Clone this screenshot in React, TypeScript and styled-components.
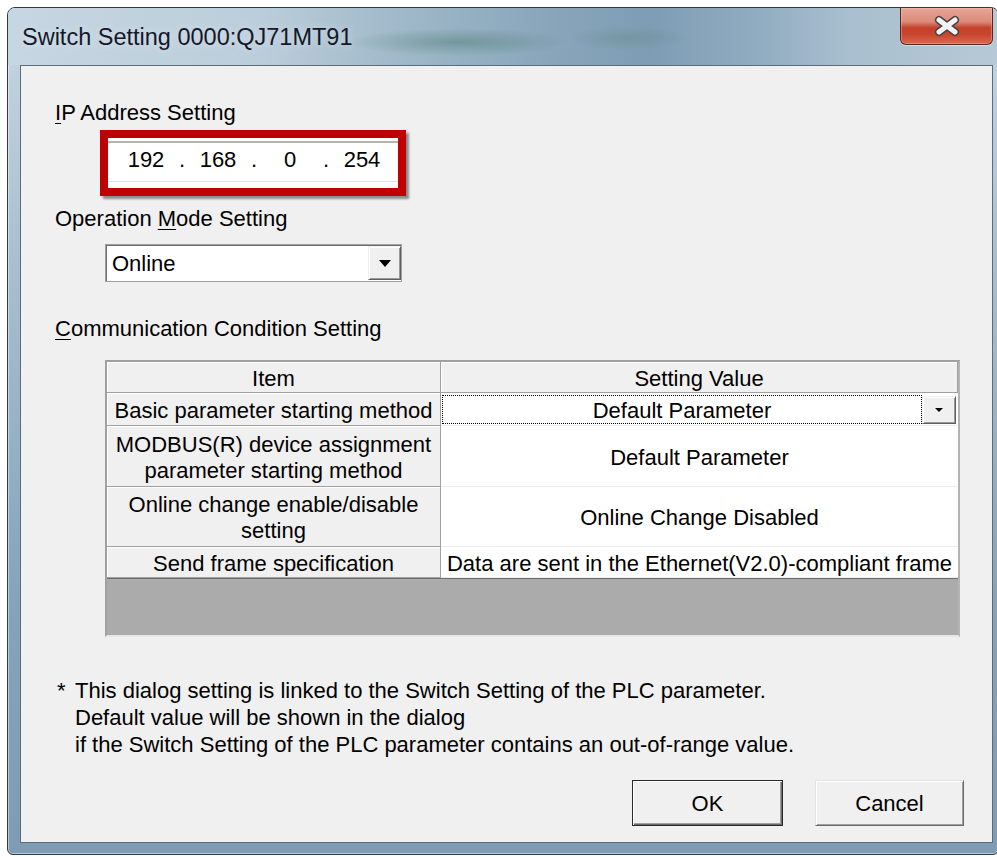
import React from 'react'
import styled, { createGlobalStyle } from 'styled-components'

const GlobalStyle = createGlobalStyle`
  html, body {
    margin: 0;
    background: #fff;
    overflow: hidden;
  }
  body {
    font-family: "Liberation Sans", Arial, sans-serif;
    color: #000;
  }
`

const Screen = styled.div`
  width: 997px;
  height: 857px;
  padding: 7px 0 0 7px;
  box-sizing: border-box;
  overflow: hidden;
`

const Window = styled.div`
  width: 992px;
  height: 848px;
  box-sizing: border-box;
  display: flex;
  flex-direction: column;
  padding: 0 5px 11px 12px;
  border: 1px solid #2f3b45;
  border-radius: 8px 8px 6px 6px;
  background: linear-gradient(180deg, #c8d7e2 0%, #a9bfcf 30%, #86a3b9 70%, #7e9cb5 100%);
  box-shadow: inset 0 0 0 1px rgba(255, 255, 255, 0.45);
`

const TitleBar = styled.div`
  height: 57px;
  flex: none;
  display: flex;
  align-items: flex-start;
  margin: 0 -5px 0 -12px;
  padding: 0 5px 0 14px;
  border-radius: 7px 7px 0 0;
  background:
    radial-gradient(ellipse 110px 14px at 450px 34px, rgba(72, 120, 108, 0.45), transparent),
    radial-gradient(ellipse 60px 12px at 620px 30px, rgba(90, 130, 115, 0.3), transparent),
    linear-gradient(90deg, #c6d6e2 0%, #bccedb 25%, #9fb8c9 40%, #88a5ba 55%, #7e9db4 65%, #8fabc0 75%, #a9bfcf 85%, #b6c9d6 100%);
`

const Caption = styled.div`
  padding-top: 15px;
  font-size: 23.5px;
  line-height: 28px;
  color: #14182a;
  text-shadow: 0 0 8px rgba(255, 255, 255, 0.5);
`

const CloseButton = styled.div`
  margin-left: auto;
  width: 93px;
  height: 37px;
  box-sizing: border-box;
  display: flex;
  align-items: center;
  justify-content: center;
  border: 1px solid #5a231b;
  border-top: none;
  border-radius: 0 0 6px 6px;
  background: linear-gradient(180deg, #e7a597 0%, #dc8b7b 38%, #c6412b 55%, #c7442d 72%, #d9694f 100%);
  box-shadow: 0 1px 0 rgba(255, 255, 255, 0.45), inset 0 0 0 1px rgba(255, 210, 200, 0.35);
`

const Client = styled.div`
  flex: 1;
  display: flex;
  flex-direction: column;
  padding-bottom: 16px;
  border: 1px solid #5f6b76;
  background: #f0f0f0;
  font-size: 22px;
  line-height: 26px;
`

const GroupLabel = styled.div<{ $top: number }>`
  margin: ${p => p.$top}px 0 0 34px;

  u {
    text-decoration-thickness: 1px;
    text-underline-offset: 3px;
  }
`

const IpFrame = styled.div`
  margin: 4px 0 0 79px;
  width: 306px;
  height: 66px;
  box-sizing: border-box;
  border: 8px solid #c00000;
  box-shadow: 3px 3px 2px rgba(60, 60, 60, 0.55);
`

const IpField = styled.div`
  height: 100%;
  box-sizing: border-box;
  display: flex;
  padding: 9px 0 0 7px;
  background: #fff;
  box-shadow: inset 0 3px 0 #fff, inset 0 5px 0 #b4b4b4, inset 0 -6px 0 #fff, inset 0 -7px 0 #e2e2e2;
`

const Octet = styled.span`
  width: 62px;
  text-align: center;
`

const Dot = styled.span`
  width: 10px;
  text-align: center;
`

const Combo = styled.div`
  margin: 12px 0 0 84px;
  width: 297px;
  height: 38px;
  box-sizing: border-box;
  display: flex;
  align-items: center;
  border: 1px solid #a0a0a0;
  background: #fff;
  box-shadow: inset 1px 1px 0 #6e6e6e;
`

const ComboText = styled.span`
  flex: 1;
  padding-left: 6px;
  padding-top: 2px;
`

const DropButton = styled.div<{ $w: number; $h: number }>`
  width: ${p => p.$w}px;
  height: ${p => p.$h}px;
  box-sizing: border-box;
  display: flex;
  align-items: center;
  justify-content: center;
  background: #f0f0f0;
  border: 1px solid;
  border-color: #f0f0f0 #5e5e5e #5e5e5e #f0f0f0;
  box-shadow: inset 1px 1px 0 #fff, inset -1px -1px 0 #9a9a9a;
  flex: none;
`

const Arrow = styled.span<{ $size: number }>`
  width: 0;
  height: 0;
  border-left: ${p => p.$size}px solid transparent;
  border-right: ${p => p.$size}px solid transparent;
  border-top: ${p => Math.round(p.$size * 1.1)}px solid #000;
`

const Table = styled.div`
  margin: 18px 0 0 84px;
  width: 855px;
  height: 277px;
  box-sizing: border-box;
  display: grid;
  grid-template-columns: 334px 1fr;
  grid-template-rows: 31px 33px 61px 60px 31px 1fr;
  border: 2px solid;
  border-color: #a0a0a0 #b4b4b4 #e6e6e6 #a0a0a0;
  background: #ababab;
`

const HeadCell = styled.div`
  display: flex;
  align-items: center;
  justify-content: center;
  padding-top: 3px;
  text-align: center;
  background: #f0f0f0;
  border-right: 1px solid #a0a0a0;
  border-bottom: 1px solid #a0a0a0;
  box-shadow: inset 1px 1px 0 #fff;
  line-height: 26px;
  white-space: nowrap;
`

const ValueCell = styled.div<{ $focused?: boolean }>`
  display: flex;
  align-items: center;
  justify-content: center;
  text-align: center;
  background: #fff;
  border-bottom: 1px solid #ececec;
  padding: ${p => (p.$focused ? '2px 2px 1px 1px' : '3px 0 0')};
  white-space: nowrap;
`

const FocusBox = styled.div`
  flex: 1;
  align-self: stretch;
  display: flex;
  align-items: center;
  justify-content: center;
  padding-top: 2px;
  border: 1px dotted #000;
`

const Filler = styled.div`
  grid-column: 1 / -1;
  border-top: 1px solid #6e6e6e;
`

const Note = styled.div`
  margin: 40px 0 0 36px;
  display: flex;
  line-height: 27px;
`

const NoteMark = styled.span`
  width: 18px;
  flex: none;
`

const ButtonRow = styled.div`
  margin-top: auto;
  display: flex;
  justify-content: flex-end;
  gap: 32px;
  padding-right: 28px;
`

const PushButton = styled.div<{ $default?: boolean; $w: number }>`
  width: ${p => p.$w}px;
  height: 46px;
  box-sizing: border-box;
  display: flex;
  align-items: center;
  justify-content: center;
  padding-top: 2px;
  background: #f0f0f0;
  border: 1px solid;
  border-color: ${p => (p.$default ? '#2a2a2a' : '#e3e3e3 #696969 #696969 #e3e3e3')};
  box-shadow: ${p =>
    p.$default
      ? 'inset 1px 1px 0 #fff, inset -1px -1px 0 #696969, inset -2px -2px 0 #a0a0a0'
      : 'inset 1px 1px 0 #fff, inset -1px -1px 0 #a0a0a0'};
`

const rows: { item: string[]; value: string }[] = [
  { item: ['MODBUS(R) device assignment', 'parameter starting method'], value: 'Default Parameter' },
  { item: ['Online change enable/disable', 'setting'], value: 'Online Change Disabled' },
  { item: ['Send frame specification'], value: 'Data are sent in the Ethernet(V2.0)-compliant frame' },
]

export default function App() {
  return (
    <Screen>
      <GlobalStyle />
      <Window>
        <TitleBar>
          <Caption>Switch Setting 0000:QJ71MT91</Caption>
          <CloseButton>
            <svg width="32" height="22" viewBox="0 0 32 22">
              <path d="M8 5 L24 17 M24 5 L8 17" stroke="#454545" strokeWidth="8" strokeLinecap="round" fill="none" />
              <path d="M8 5 L24 17 M24 5 L8 17" stroke="#f4f4f4" strokeWidth="5" strokeLinecap="round" fill="none" />
            </svg>
          </CloseButton>
        </TitleBar>

        <Client>
          <GroupLabel $top={34}>
            <u>I</u>P Address Setting
          </GroupLabel>
          <IpFrame>
            <IpField>
              <Octet>192</Octet>
              <Dot>.</Dot>
              <Octet>168</Octet>
              <Dot>.</Dot>
              <Octet>0</Octet>
              <Dot>.</Dot>
              <Octet>254</Octet>
            </IpField>
          </IpFrame>

          <GroupLabel $top={10}>
            Operation <u>M</u>ode Setting
          </GroupLabel>
          <Combo>
            <ComboText>Online</ComboText>
            <DropButton $w={33} $h={34}>
              <Arrow $size={6} />
            </DropButton>
          </Combo>

          <GroupLabel $top={34}>
            <u>C</u>ommunication Condition Setting
          </GroupLabel>
          <Table>
            <HeadCell>Item</HeadCell>
            <HeadCell>Setting Value</HeadCell>

            <HeadCell>Basic parameter starting method</HeadCell>
            <ValueCell $focused>
              <FocusBox>Default Parameter</FocusBox>
              <DropButton $w={34} $h={28}>
                <Arrow $size={4} />
              </DropButton>
            </ValueCell>

            {rows.map(r => (
              <React.Fragment key={r.value}>
                <HeadCell>
                  <div>
                    {r.item.map(line => (
                      <div key={line}>{line}</div>
                    ))}
                  </div>
                </HeadCell>
                <ValueCell>{r.value}</ValueCell>
              </React.Fragment>
            ))}

            <Filler />
          </Table>

          <Note>
            <NoteMark>*</NoteMark>
            <div>
              This dialog setting is linked to the Switch Setting of the PLC parameter.
              <br />
              Default value will be shown in the dialog
              <br />
              if the Switch Setting of the PLC parameter contains an out-of-range value.
            </div>
          </Note>

          <ButtonRow>
            <PushButton $default $w={151}>OK</PushButton>
            <PushButton $w={149}>Cancel</PushButton>
          </ButtonRow>
        </Client>
      </Window>
    </Screen>
  )
}
